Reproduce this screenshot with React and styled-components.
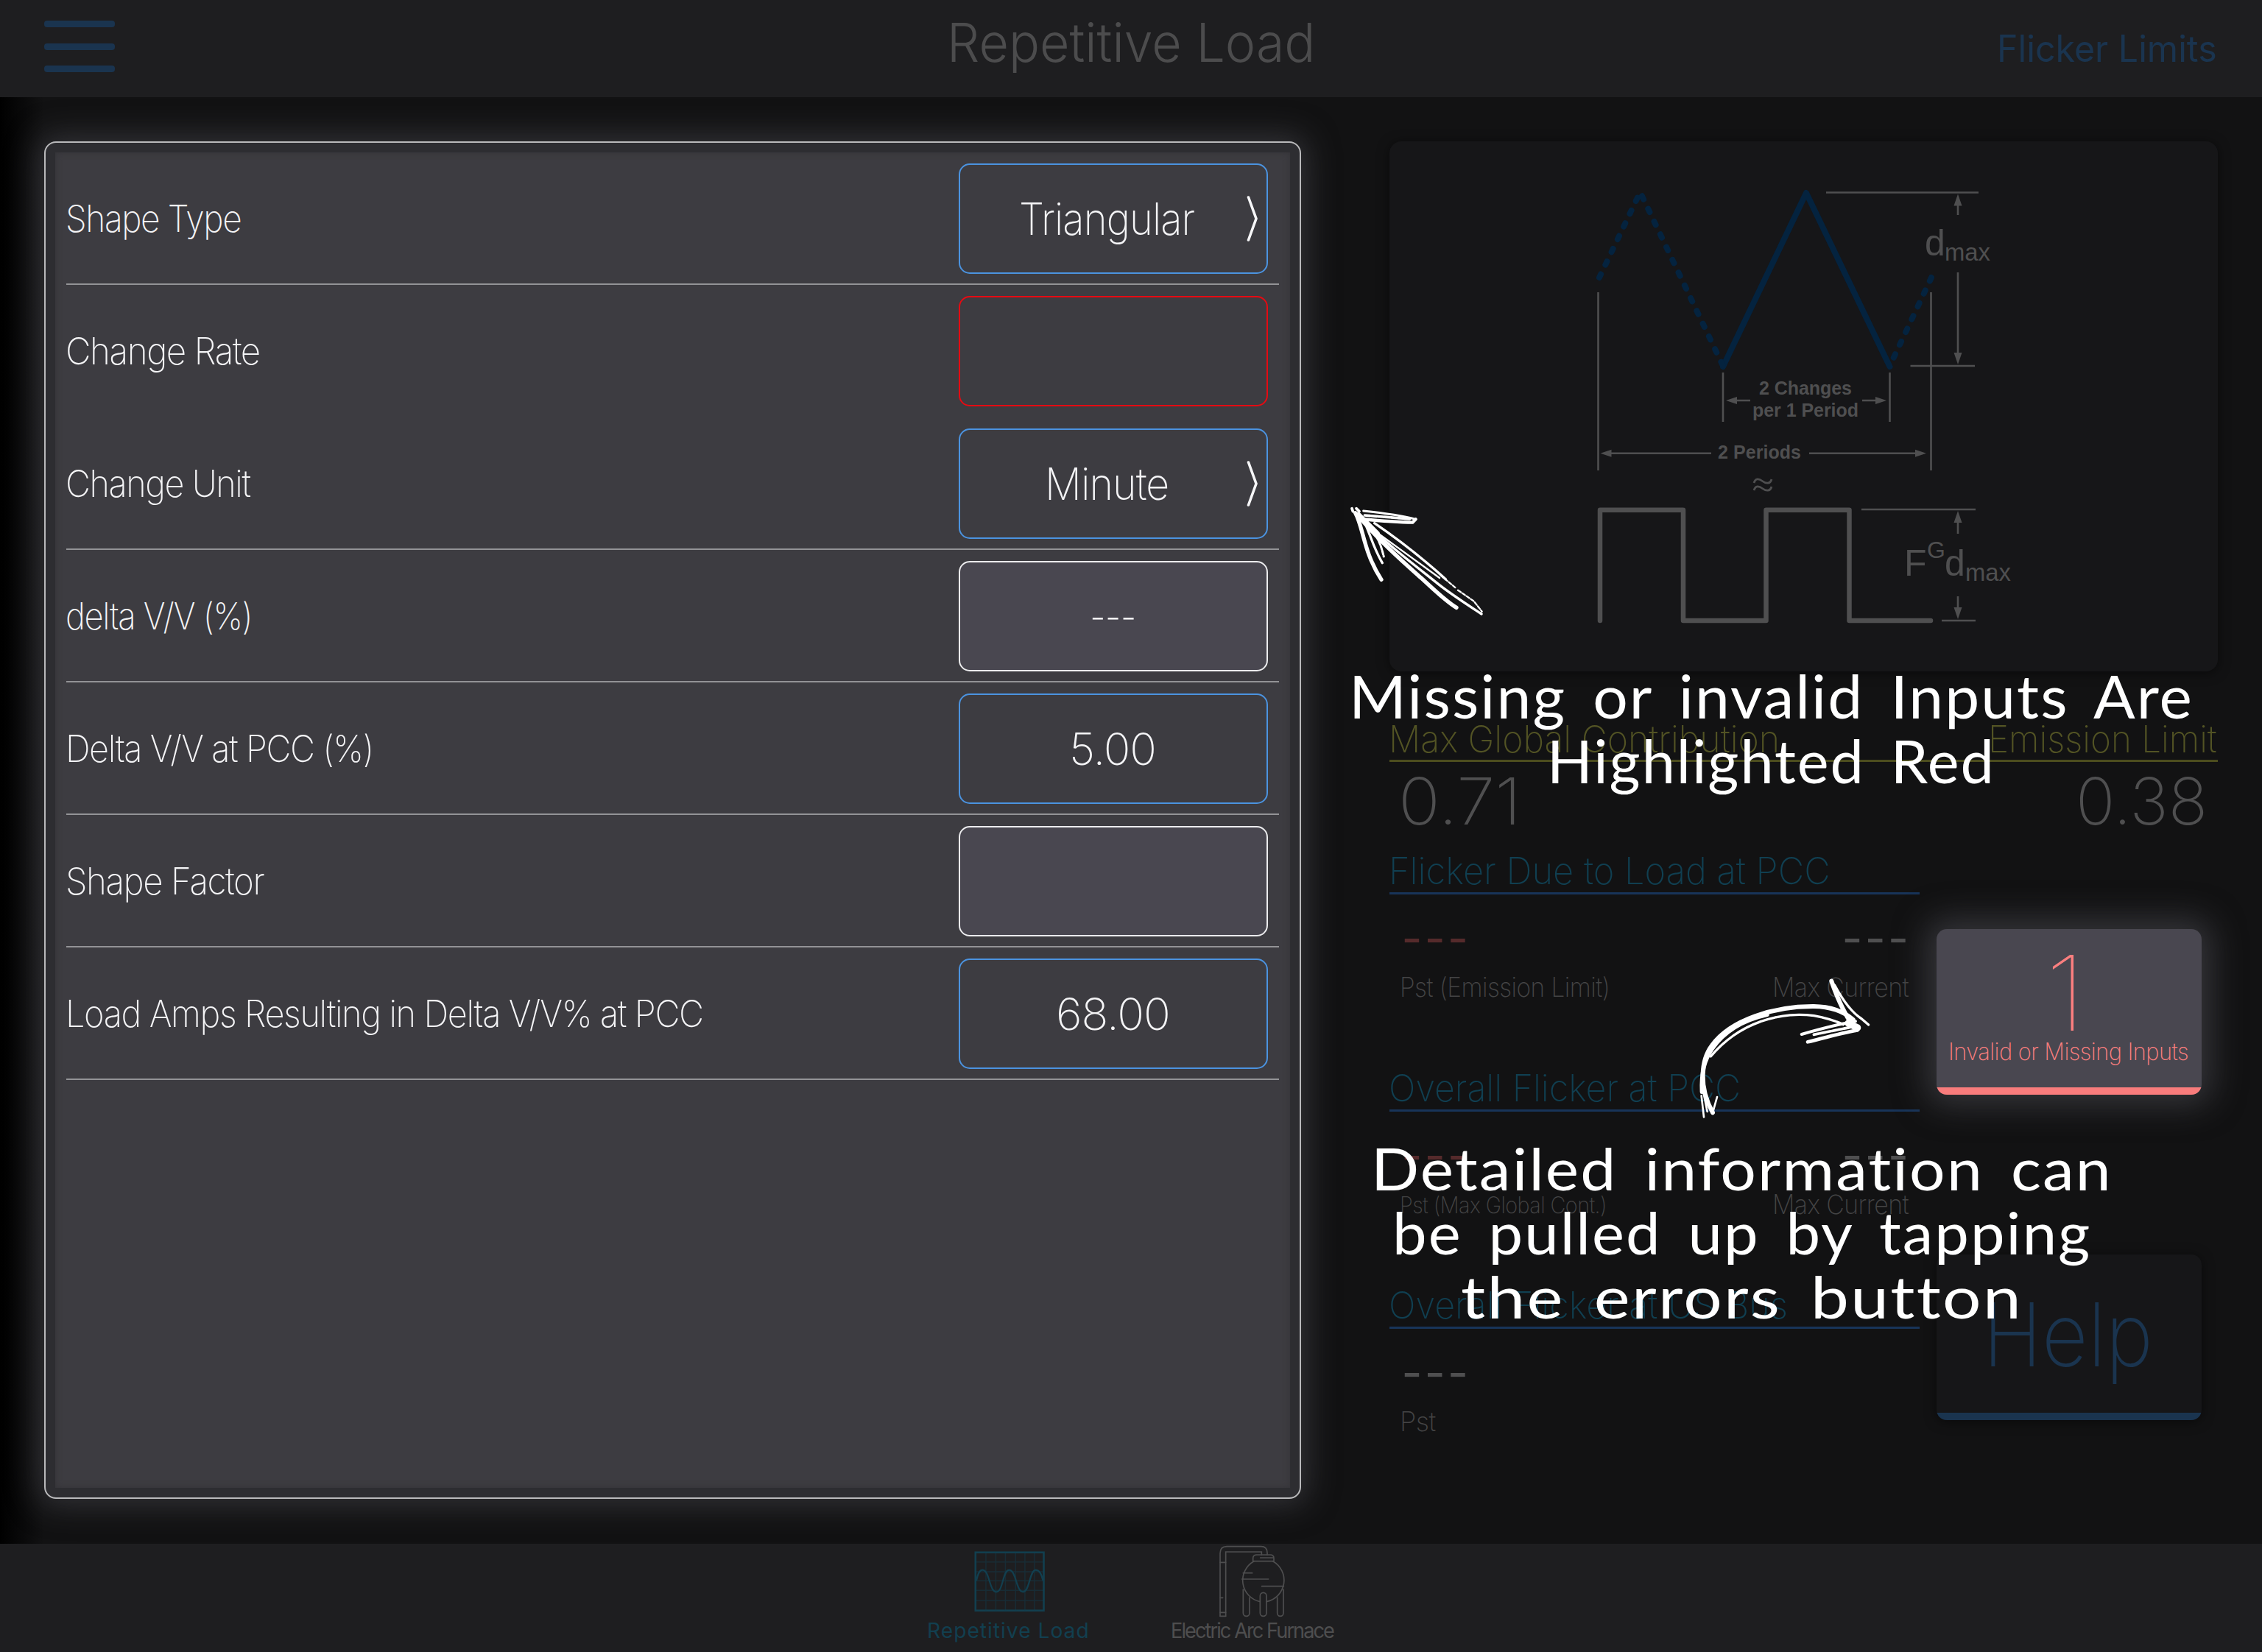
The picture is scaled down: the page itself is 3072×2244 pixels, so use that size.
import React, { useLayoutEffect, useRef, useState } from "react";
import styled, { createGlobalStyle } from "styled-components";

const Global = createGlobalStyle`
  html, body { margin: 0; background: #111112; }
  body { width: 3072px; height: 2244px; overflow: hidden; font-family: Inter, "Liberation Sans", sans-serif; }
  * { box-sizing: border-box; }
`;

/* ---------- text that is condensed or widened to a set width ---------- */

const FitBox = styled.span`
  display: inline-block;
  flex: none;
  margin: 0 0.03em 0 -0.03em;
  white-space: nowrap;
  line-height: 1.2;
  font-family: ${(p) => p.$family || 'Inter, "Liberation Sans", sans-serif'};
  font-size: ${(p) => p.$size}px;
  font-weight: ${(p) => p.$weight};
  letter-spacing: ${(p) => p.$track || 0}px;
  word-spacing: ${(p) => p.$words || 0}px;
  color: ${(p) => p.$color};
`;
const FitInner = styled.span`
  display: inline-block;
  transform-origin: 0 50%;
`;
const Ratio = styled.span`
  letter-spacing: -1px;
`;

function Fit({ children, width, size, weight = 200, track, words, color = "#f4f4f6", family }) {
  const ref = useRef(null);
  const [scale, setScale] = useState(1);
  const target = width + size * 0.09;
  useLayoutEffect(() => {
    setScale(target / ref.current.offsetWidth);
  }, [target]);
  const parts = String(children).split("V/V");
  return (
    <FitBox $size={size} $weight={weight} $track={track} $words={words} $color={color} $family={family} style={{ width: target }}>
      <FitInner ref={ref} style={{ transform: `scaleX(${scale})` }}>
        {parts[0]}
        {parts.length > 1 && (
          <>
            <Ratio>V/</Ratio>V{parts[1]}
          </>
        )}
      </FitInner>
    </FitBox>
  );
}

/* ---------- page frame ---------- */

const Page = styled.div`
  position: relative;
  width: 3072px;
  height: 2244px;
  overflow: hidden;
  display: flex;
  flex-direction: column;
  background: #111112;
`;
const Header = styled.header`
  height: 132px;
  flex: none;
  display: grid;
  grid-template-columns: 1fr auto 1fr;
  align-items: center;
  padding: 0 60px;
  background: #1e1e20;
`;
const Menu = styled.button`
  width: 96px;
  height: 70px;
  margin-bottom: 6px;
  padding: 0;
  border: 0;
  background: none;
  display: flex;
  flex-direction: column;
  justify-content: space-between;
`;
const MenuBar = styled.span`
  height: 9px;
  border-radius: 4px;
  background: #1a344f;
`;
const Title = styled.h1`
  margin: 0 -2px 16px 2px;
  font-size: 0;
`;
const HeaderLink = styled.div`
  justify-self: end;
`;
const Main = styled.main`
  flex: 1;
  display: flex;
  align-items: flex-start;
  gap: 120px;
  padding: 60px;
  background: linear-gradient(90deg, #000 0, #121213 60px);
`;

/* ---------- input form ---------- */

const FormPanel = styled.section`
  width: 1707px;
  height: 1844px;
  flex: none;
  padding: 13px;
  border: 2px solid #b9b9bb;
  border-radius: 16px;
  background: #2d2d31;
  box-shadow: 0 0 42px 8px rgba(66, 66, 72, 0.68);
`;
const FormBody = styled.div`
  height: 100%;
  padding: 0 15px;
  background: #3d3c41;
  box-shadow: inset 0 0 10px rgba(45, 45, 49, 0.6);
`;
const Row = styled.div`
  height: 180px;
  display: flex;
  align-items: center;
  justify-content: space-between;
  padding-right: 15px;
  box-shadow: ${(p) => (p.$line ? "inset 0 -2px 0 #939396" : "none")};
`;
const borders = { input: "#4b93e0", error: "#e60a12", output: "#ececee" };
const ValueBox = styled.div`
  width: 420px;
  height: 150px;
  display: flex;
  align-items: center;
  justify-content: center;
  padding-left: ${(p) => (p.$picker ? 13 : 2)}px;
  border: 2px solid ${(p) => borders[p.$kind]};
  border-radius: 15px;
  background: ${(p) => (p.$kind === "output" ? "#494750" : "transparent")};
`;
const Picker = styled.div`
  flex: 1;
  display: flex;
  justify-content: center;
`;
const Chevron = styled.svg`
  width: 16px;
  height: 62px;
  flex: none;
  margin: 0 11px 0 0;
`;

const fields = [
  { label: "Shape Type", w: 234, value: "Triangular", vw: 233, kind: "input", picker: true, line: true },
  { label: "Change Rate", w: 259, kind: "error" },
  { label: "Change Unit", w: 246, value: "Minute", vw: 163, kind: "input", picker: true, line: true },
  { label: "delta V/V (%)", w: 249, value: "---", vw: 57, kind: "output", line: true },
  { label: "Delta V/V at PCC (%)", w: 413, value: "5.00", vw: 113, kind: "input", line: true },
  { label: "Shape Factor", w: 265, kind: "output", line: true },
  { label: "Load Amps Resulting in Delta V/V% at PCC", w: 861, value: "68.00", vw: 149, kind: "input", line: true },
];

function Field({ f }) {
  const text = f.value && <Fit width={f.vw} size={60} track={-1}>{f.value}</Fit>;
  return (
    <Row $line={f.line}>
      <Fit width={f.w} size={50} track={-1.5}>{f.label}</Fit>
      <ValueBox $kind={f.kind} $picker={f.picker}>
        {f.picker ? (
          <>
            <Picker>{text}</Picker>
            <Chevron viewBox="0 0 16 62">
              <path d="M2.5 2 L13 31 L2.5 60" fill="none" stroke="#f6f6f8" strokeWidth="3.6" strokeLinecap="round" />
            </Chevron>
          </>
        ) : (
          text
        )}
      </ValueBox>
    </Row>
  );
}

/* ---------- results column ---------- */

const Results = styled.section`
  width: 1125px;
  flex: none;
`;
const DiagramCard = styled.div`
  height: 720px;
  border-radius: 16px;
  background: #161618;
  box-shadow: 0 2px 16px rgba(0, 0, 0, 0.5);
`;
const Diagram = styled.svg`
  display: block;
  width: 1125px;
  height: 720px;
`;
const SummaryHead = styled.div`
  margin-top: 62px;
  height: 61px;
  padding-top: 2px;
  display: flex;
  align-items: center;
  justify-content: space-between;
  border-bottom: 3px solid #4c4d1e;
`;
const SummaryValues = styled.div`
  height: 106px;
  padding: 2px 11px 0 15px;
  display: flex;
  align-items: center;
  justify-content: space-between;
`;
const Lower = styled.div`
  margin-top: 11px;
  display: flex;
  gap: 23px;
`;
const Sections = styled.div`
  width: 720px;
`;
const Section = styled.div`
  height: 295px;
`;
const SectionHead = styled.div`
  height: 63px;
  padding-top: 2px;
  display: flex;
  align-items: center;
  border-bottom: 3px solid #183459;
`;
const Pair = styled.div`
  height: ${(p) => p.$height}px;
  padding: ${(p) => p.$top || 0}px ${(p) => 14 - (p.$shift || 0)}px 0 ${(p) => 15 + (p.$shift || 0)}px;
  display: flex;
  align-items: center;
  justify-content: space-between;
`;
const Buttons = styled.div`
  width: 360px;
  padding-top: 110px;
  display: flex;
  flex-direction: column;
  gap: 217px;
`;
const Tile = styled.button`
  height: 225px;
  padding: 0;
  border: 0;
  overflow: hidden;
  border-radius: 14px;
  display: flex;
  flex-direction: column;
  align-items: center;
  background: ${(p) => (p.$lit ? "#494750" : "#161618")};
  box-shadow: ${(p) => (p.$lit ? "0 0 44px 14px rgba(74, 74, 80, 0.62)" : "0 2px 16px rgba(0, 0, 0, 0.5)")};
`;
const TileBody = styled.div`
  flex: 1;
  padding: ${(p) => (p.$lift ? "0 0 22px" : "3px 0 0 3px")};
  display: flex;
  flex-direction: column;
  align-items: center;
  justify-content: center;
`;
const TileBar = styled.div`
  align-self: stretch;
  height: 10px;
  background: ${(p) => p.$color};
`;
const Count = styled.div`
  height: 148px;
  margin: 6px 6px -14px 0;
  display: flex;
  align-items: center;
`;

const sections = [
  { title: "Flicker Due to Load at PCC", w: 595, left: "Pst (Emission Limit)", lw: 282, ls: 36, alert: true, right: true },
  { title: "Overall Flicker at PCC", w: 474, left: "Pst (Max Global Cont.)", lw: 278, ls: 31, alert: true, right: true },
  { title: "Overall Flicker at US Bus", w: 538, left: "Pst", lw: 45, ls: 36 },
];

const G = "#4f4f50";
const head = (x, y, dir) => {
  const d = {
    up: `M${x} ${y} l-5.5 16 h11 Z`,
    down: `M${x} ${y} l-5.5 -16 h11 Z`,
    left: `M${x} ${y} l15 -5 v10 Z`,
    right: `M${x} ${y} l-15 -5 v10 Z`,
  }[dir];
  return <path d={d} fill={G} stroke="none" />;
};

function LoadDiagram() {
  return (
    <Diagram viewBox="1887 192 1125 720" fontFamily='"Liberation Sans", Arial, sans-serif' fill={G}>
      <g fill="none" stroke="#04233f" strokeWidth="8" strokeLinecap="round" strokeLinejoin="round">
        <path d="M2340 498 L2453 262 L2566.5 498" />
        <path d="M2172 377 L2227.500 261 L2340 497" strokeDasharray="5 14.2" />
        <path d="M2623 377 L2566.500 497" strokeDasharray="5 14.2" />
      </g>
      <g fill="none" stroke={G} strokeWidth="2.6">
        <path d="M2170.5 397 V639 M2622.5 397 V639 M2340 506 V573 M2566.5 506 V573" />
        <path d="M2480 261.5 H2687 M2594.5 497 H2682 M2528 692 H2683 M2637 843 H2683" />
        <path d="M2659 275 V292 M2659 370 V482 M2659 705 V725 M2659 810 V830" />
        <path d="M2355 544 H2377 M2529 544 H2551 M2185 615.7 H2324 M2457 615.7 H2603" />
      </g>
      {head(2659, 263.5, "up")}
      {head(2659, 495, "down")}
      {head(2659, 694, "up")}
      {head(2659, 841, "down")}
      {head(2344, 544, "left")}
      {head(2562, 544, "right")}
      {head(2173.5, 615.7, "left")}
      {head(2616, 615.7, "right")}
      <path
        d="M2173 843 V692.8 H2286 V843 H2398.5 V692.8 H2511.5 V843 H2622"
        fill="none" stroke={G} strokeWidth="6.5" strokeLinecap="round" strokeLinejoin="round"
      />
      <text x="2614" y="346.5" fontSize="50">d</text>
      <text x="2641" y="353.5" fontSize="33" textLength="62" lengthAdjust="spacingAndGlyphs">max</text>
      <g fontWeight="700" fontSize="25">
        <text x="2389" y="536" textLength="126">2 Changes</text>
        <text x="2380" y="566" textLength="144">per 1 Period</text>
        <text x="2333" y="623" textLength="113">2 Periods</text>
      </g>
      <g fill="none" stroke={G} strokeWidth="2.8">
        <path d="M2382 656 C2384 649 2389 650 2393.500 653.500 C2398 657 2404 658 2406 651" />
        <path d="M2382 666 C2384 659 2389 660 2393.500 663.500 C2398 667 2404 668 2406 661" />
      </g>
      <text x="2586" y="782" fontSize="50">F</text>
      <text x="2617" y="758" fontSize="32">G</text>
      <text x="2641" y="782" fontSize="50">d</text>
      <text x="2669" y="789" fontSize="33" textLength="62" lengthAdjust="spacingAndGlyphs">max</text>
    </Diagram>
  );
}

/* ---------- tab bar ---------- */

const Footer = styled.footer`
  height: 147px;
  flex: none;
  display: flex;
  justify-content: center;
  background: #1e1e20;
`;
const Tab = styled.div`
  width: 331px;
  display: flex;
  flex-direction: column;
  align-items: center;
`;
const TabIcon = styled.svg`
  width: 110px;
  height: 100px;
  margin-bottom: 1px;
`;

function WaveIcon() {
  return (
    <TabIcon viewBox="1316 2097 110 100" fill="none" stroke="#123f4f" strokeWidth="2.2">
      <rect x="1324.800" y="2108.700" width="92.700" height="79" strokeWidth="2.600" />
      <path
        opacity="0.45" strokeWidth="1.500"
        d="M1338.900 2109 V2188 M1352.400 2109 V2188 M1365.400 2109 V2188 M1379.300 2109 V2188 M1391.900 2109 V2188 M1405 2109 V2188 M1325 2121.700 H1417 M1325 2135 H1417 M1325 2147.300 H1417 M1325 2160.300 H1417 M1325 2174 H1417"
      />
      <path d="M1326 2147 C1328 2138 1330 2132.700 1334.300 2132.700 C1344 2132.700 1343.500 2162.300 1353.200 2162.300 C1362.500 2162.300 1361.500 2132.700 1370.500 2132.700 C1380 2132.700 1380 2162.300 1389.400 2162.300 C1398.500 2162.300 1398 2132.700 1406.700 2132.700 C1412 2132.700 1414.500 2138 1416.500 2147" />
    </TabIcon>
  );
}

function FurnaceIcon() {
  return (
    <TabIcon viewBox="351 21 330 300" fill="none" stroke="#4e4e4f" strokeWidth="5" strokeLinecap="round">
      <path d="M381 316 V60 Q381 32 408 32 H548 Q573 32 573 58 V66 M404 316 V54 H550 V66" />
      <path d="M381 97 H404 M381 241 H392 M381 301 H404 M381 316 H404" />
      <path d="M515 92 V80 Q515 66 530 66 H586 Q600 66 600 80 V92 Z M545 78 H597" />
      <path d="M519 92 A89 89 0 0 0 544 257 M596 92 A89 89 0 0 1 570 257" />
      <path d="M475 140 H512 M470 165 H578 M551 194 H640" />
      <path d="M475 207 V303 A13 13 0 0 0 501 303 V240 M614 240 V303 A12.500 13 0 0 0 639 303 V207" />
      <rect x="544" y="220" width="26" height="96" rx="13" />
    </TabIcon>
  );
}

/* ---------- tutorial notes drawn over the screen ---------- */

const Note = styled.div`
  position: absolute;
  left: ${(p) => p.$x}px;
  top: ${(p) => p.$y}px;
  width: ${(p) => p.$w}px;
  display: flex;
  flex-direction: column;
  align-items: center;
`;
const NoteLine = styled.div`
  height: ${(p) => p.$h}px;
  display: flex;
  align-items: center;
`;
const Sketch = styled.svg`
  position: absolute;
  left: ${(p) => p.$x}px;
  top: ${(p) => p.$y}px;
`;
const hand = 'Lato, "Open Sans", sans-serif';

function Hand({ lines, size, lineHeight, x, y, w }) {
  return (
    <Note $x={x} $y={y} $w={w}>
      {lines.map(([text, width]) => (
        <NoteLine key={text} $h={lineHeight}>
          <Fit width={width} size={size} weight={400} words={size * 0.15} track={2} color="#fff" family={hand}>{text}</Fit>
        </NoteLine>
      ))}
    </Note>
  );
}

export default function App() {
  return (
    <Page>
      <Global />
      <Header>
        <Menu aria-label="Menu"><MenuBar /><MenuBar /><MenuBar /></Menu>
        <Title><Fit width={494} size={73} weight={300} color="#4c4c4d">Repetitive Load</Fit></Title>
        <HeaderLink><Fit width={294} size={50} weight={400} color="#1a344f">Flicker Limits</Fit></HeaderLink>
      </Header>

      <Main>
        <FormPanel>
          <FormBody>
            {fields.map((f) => <Field key={f.label} f={f} />)}
          </FormBody>
        </FormPanel>

        <Results>
          <DiagramCard><LoadDiagram /></DiagramCard>
          <SummaryHead>
            <Fit width={527} size={50} color="#525324">Max Global Contribution</Fit>
            <Fit width={306} size={50} color="#525324">Emission Limit</Fit>
          </SummaryHead>
          <SummaryValues>
            <Fit width={159} size={88} color="#4f4f50">0.71</Fit>
            <Fit width={171} size={88} color="#4f4f50">0.38</Fit>
          </SummaryValues>
          <Lower>
            <Sections>
              {sections.map((s) => (
                <Section key={s.title}>
                  <SectionHead><Fit width={s.w} size={50} color="#103f51">{s.title}</Fit></SectionHead>
                  <Pair $height={105} $top={13} $shift={4}>
                    <Fit width={86} size={84} weight={300} track={3} color={s.alert ? "#552a2b" : "#4f4f50"}>---</Fit>
                    {s.right && <Fit width={86} size={84} weight={300} track={3} color="#4f4f50">---</Fit>}
                  </Pair>
                  <Pair $height={44}>
                    <Fit width={s.lw} size={s.ls} track={-0.6} color="#444445">{s.left}</Fit>
                    {s.right && <Fit width={182} size={36} track={-0.6} color="#444445">Max Current</Fit>}
                  </Pair>
                </Section>
              ))}
            </Sections>
            <Buttons>
              <Tile $lit>
                <TileBody $lift>
                  <Count><Fit width={44} size={141} weight={100} color="#fb7f7f">1</Fit></Count>
                  <Fit width={323} size={33} track={-0.6} color="#fb7f7f">Invalid or Missing Inputs</Fit>
                </TileBody>
                <TileBar $color="#f97c7c" />
              </Tile>
              <Tile>
                <TileBody><Fit width={220} size={119} color="#1a344f">Help</Fit></TileBody>
                <TileBar $color="#1a344f" />
              </Tile>
            </Buttons>
          </Lower>
        </Results>
      </Main>

      <Footer>
        <Tab>
          <WaveIcon />
          <Fit width={218} size={28.5} weight={400} track={1} color="#123f4f">Repetitive Load</Fit>
        </Tab>
        <Tab>
          <FurnaceIcon />
          <Fit width={218} size={28.5} weight={400} track={-2} color="#4e4e4f">Electric Arc Furnace</Fit>
        </Tab>
      </Footer>

      <Sketch $x={1820} $y={670} width="220" height="180" viewBox="0 0 660 540" fill="none" stroke="#fff" strokeLinecap="round" strokeLinejoin="round">
        <path d="M48 62 L52 74 M66 62 L78 74" strokeWidth="11" />
        <path d="M70 85 C150 190 280 300 330 345 C380 390 430 440 474 466" strokeWidth="16" />
        <path d="M90 105 C180 200 300 290 400 370 C450 410 520 455 576 492" strokeWidth="10" />
        <path d="M140 122 C240 190 330 260 430 350" strokeWidth="10" />
        <path d="M130 145 C240 225 330 290 405 345" strokeWidth="7" />
        <path d="M410 335 L470 385 M480 395 L545 440 L578 482" strokeWidth="7" strokeDasharray="14 7" />
        <path d="M95 72 C170 80 240 88 308 106" strokeWidth="9" />
        <path d="M85 105 C160 112 230 118 295 119 L308 106" strokeWidth="13" />
        <path d="M100 90 L285 105" strokeWidth="11" strokeDasharray="22 5" />
        <path d="M62 80 C95 140 95 240 168 352" strokeWidth="16" />
        <path d="M105 130 C130 190 140 230 172 284" strokeWidth="10" />
        <path d="M135 160 C160 190 168 220 178 258" strokeWidth="9" strokeDasharray="16 5" />
        <path d="M75 90 L150 165" strokeWidth="24" />
      </Sketch>

      <Sketch $x={2290} $y={1310} width="270" height="220" viewBox="0 0 810 660" fill="none" stroke="#fff" strokeLinecap="round" strokeLinejoin="round">
        <path d="M108 604 C50 500 60 390 105 330 C180 225 360 170 520 171 C590 172 640 190 680 225" strokeWidth="18" />
        <path d="M64 520 C60 440 75 390 105 345 C160 265 240 225 330 205" strokeWidth="16" />
        <path d="M100 375 C180 280 300 208 460 205 C530 205 590 222 640 245" strokeWidth="10" strokeDasharray="60 3" />
        <path d="M108 604 L126 540 M62 535 L72 622 M66 500 L86 600" strokeWidth="8" />
        <path d="M592 68 C620 150 650 210 685 258" strokeWidth="18" />
        <path d="M605 85 C640 150 680 200 715 222 L743 246" strokeWidth="10" />
        <path d="M470 285 C540 265 610 245 690 232" strokeWidth="12" />
        <path d="M495 316 C560 300 630 280 698 268" strokeWidth="14" />
        <path d="M520 286 L690 252" strokeWidth="11" strokeDasharray="20 5" />
        <path d="M660 240 L698 258" strokeWidth="28" />
      </Sketch>

      <Hand
        x={1837} y={900} w={1142} size={82} lineHeight={88}
        lines={[["Missing or invalid Inputs Are", 1140], ["Highlighted Red", 602]]}
      />
      <Hand
        x={1867} y={1542} w={1001} size={80} lineHeight={87}
        lines={[["Detailed information can", 1000], ["be pulled up by tapping", 942], ["the errors button", 756]]}
      />
    </Page>
  );
}
